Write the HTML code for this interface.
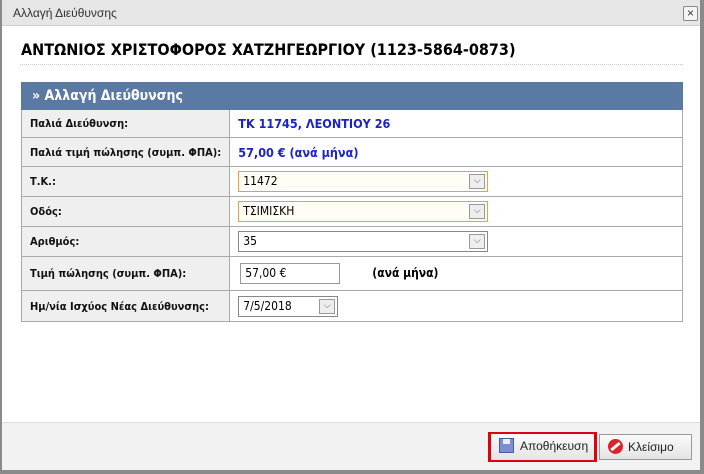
<!DOCTYPE html>
<html><head><meta charset="utf-8"><style>
*{margin:0;padding:0;box-sizing:border-box}
body{width:704px;height:474px;background:#8a8a8a;position:relative;overflow:hidden;font-family:"DejaVu Sans Condensed","DejaVu Sans","Liberation Sans",sans-serif}
.win{position:absolute;left:2px;top:0;width:698px;height:470px;background:#fff}
.tb{position:absolute;left:0;top:0;width:698px;height:26px;background:#e6e6e6;border-bottom:1px solid #d0d0d0;font:12px "Liberation Sans",sans-serif;color:#333;line-height:26px;padding-left:11px}
.x{position:absolute;left:681px;top:6px;width:15px;height:15px;border:1px solid #888;border-radius:2px;background:#f4f4f4;font:12px "Liberation Sans",sans-serif;text-align:center;line-height:12px;color:#333}
h1{position:absolute;left:19px;top:40px;font:bold 16px "DejaVu Sans Condensed","DejaVu Sans",sans-serif;color:#000;white-space:nowrap}
.dot{position:absolute;left:18px;top:64px;width:663px;border-top:1px dotted #ccc}
table{position:absolute;left:21px;top:82px;width:662px;border-collapse:collapse;font-size:11px}
td{border:1px solid #aaa;padding:0 8px;white-space:nowrap}
th{background:#5b7aa3;color:#fff;text-align:left;font:bold 14px "DejaVu Sans Condensed","DejaVu Sans",sans-serif;height:27px;padding-left:10px;border:1px solid #5b7aa3}
td.l{background:#efefef;font-weight:bold;width:206px;color:#111}
td.v{color:#1a23c8;font-weight:bold;font-size:12.5px}
.sel{position:relative;width:250px;height:21px;border:1px solid #888;font:12px "DejaVu Sans Condensed","DejaVu Sans",sans-serif;line-height:19px;padding-left:4px;background:#fff}
.sel.o{border-color:#e8a040;background:#fffdf4}
.sel i{position:absolute;right:2px;top:2px;width:16px;height:15px;border:1px solid #999;background:#eee;font-style:normal;font-size:9px;text-align:center;line-height:13px;color:#555}
.inp{display:inline-block;width:100px;height:21px;border:1px solid #999;font:12px "DejaVu Sans Condensed","DejaVu Sans",sans-serif;line-height:19px;padding-left:4px;margin-left:2px}
.ft{position:absolute;left:2px;top:422px;width:698px;height:48px;background:#f2f2f2;border-top:1px solid #ddd}
.btn{position:absolute;height:26px;border:1px solid #999;background:linear-gradient(#fafafa,#e4e4e4);font:12px "Liberation Sans",sans-serif;line-height:24px;color:#222}
</style></head><body>
<div class="win">
<div class="tb">Αλλαγή Διεύθυνσης<div class="x">×</div></div>
<h1>ΑΝΤΩΝΙΟΣ ΧΡΙΣΤΟΦΟΡΟΣ ΧΑΤΖΗΓΕΩΡΓΙΟΥ (1123-5864-0873)</h1>
<div class="dot"></div>
</div>
<table>
<tr><th colspan="2">» Αλλαγή Διεύθυνσης</th></tr>
<tr style="height:28px"><td class="l">Παλιά Διεύθυνση:</td><td class="v">ΤΚ 11745, ΛΕΟΝΤΙΟΥ 26</td></tr>
<tr style="height:29px"><td class="l">Παλιά τιμή πώλησης (συμπ. ΦΠΑ):</td><td class="v">57,00 € (ανά μήνα)</td></tr>
<tr style="height:30px"><td class="l">Τ.Κ.:</td><td><div class="sel o">11472<i>⌵</i></div></td></tr>
<tr style="height:30px"><td class="l">Οδός:</td><td><div class="sel o">ΤΣΙΜΙΣΚΗ<i>⌵</i></div></td></tr>
<tr style="height:30px"><td class="l">Αριθμός:</td><td><div class="sel">35<i>⌵</i></div></td></tr>
<tr style="height:34px"><td class="l">Τιμή πώλησης (συμπ. ΦΠΑ):</td><td><span class="inp">57,00 €</span><b style="margin-left:32px;font-size:12px">(ανά μήνα)</b></td></tr>
<tr style="height:31px"><td class="l">Ημ/νία Ισχύος Νέας Διεύθυνσης:</td><td><div class="sel" style="width:100px">7/5/2018<i>⌵</i></div></td></tr>
</table>
<div class="ft"></div>
<div style="position:absolute;left:488px;top:432px;width:109px;height:30px;border:3px solid #e00010"></div>
<div class="btn" style="left:491px;top:434px;width:103px;border:none;padding-left:8px"><span style="display:inline-block;width:15px;height:15px;background:#7d8fd0;border:1px solid #4a5aa0;vertical-align:-3px;margin-right:6px;position:relative"><span style="position:absolute;left:3px;top:0;width:7px;height:5px;background:#eef"></span></span>Αποθήκευση</div>
<div class="btn" style="left:599px;top:434px;width:93px;padding-left:8px"><span style="display:inline-block;width:15px;height:15px;border-radius:50%;background:#e0202a;vertical-align:-3px;margin-right:5px;position:relative"><span style="position:absolute;left:2px;top:6px;width:11px;height:3px;background:#fff;transform:rotate(-40deg)"></span></span>Κλείσιμο</div>
</body></html>
